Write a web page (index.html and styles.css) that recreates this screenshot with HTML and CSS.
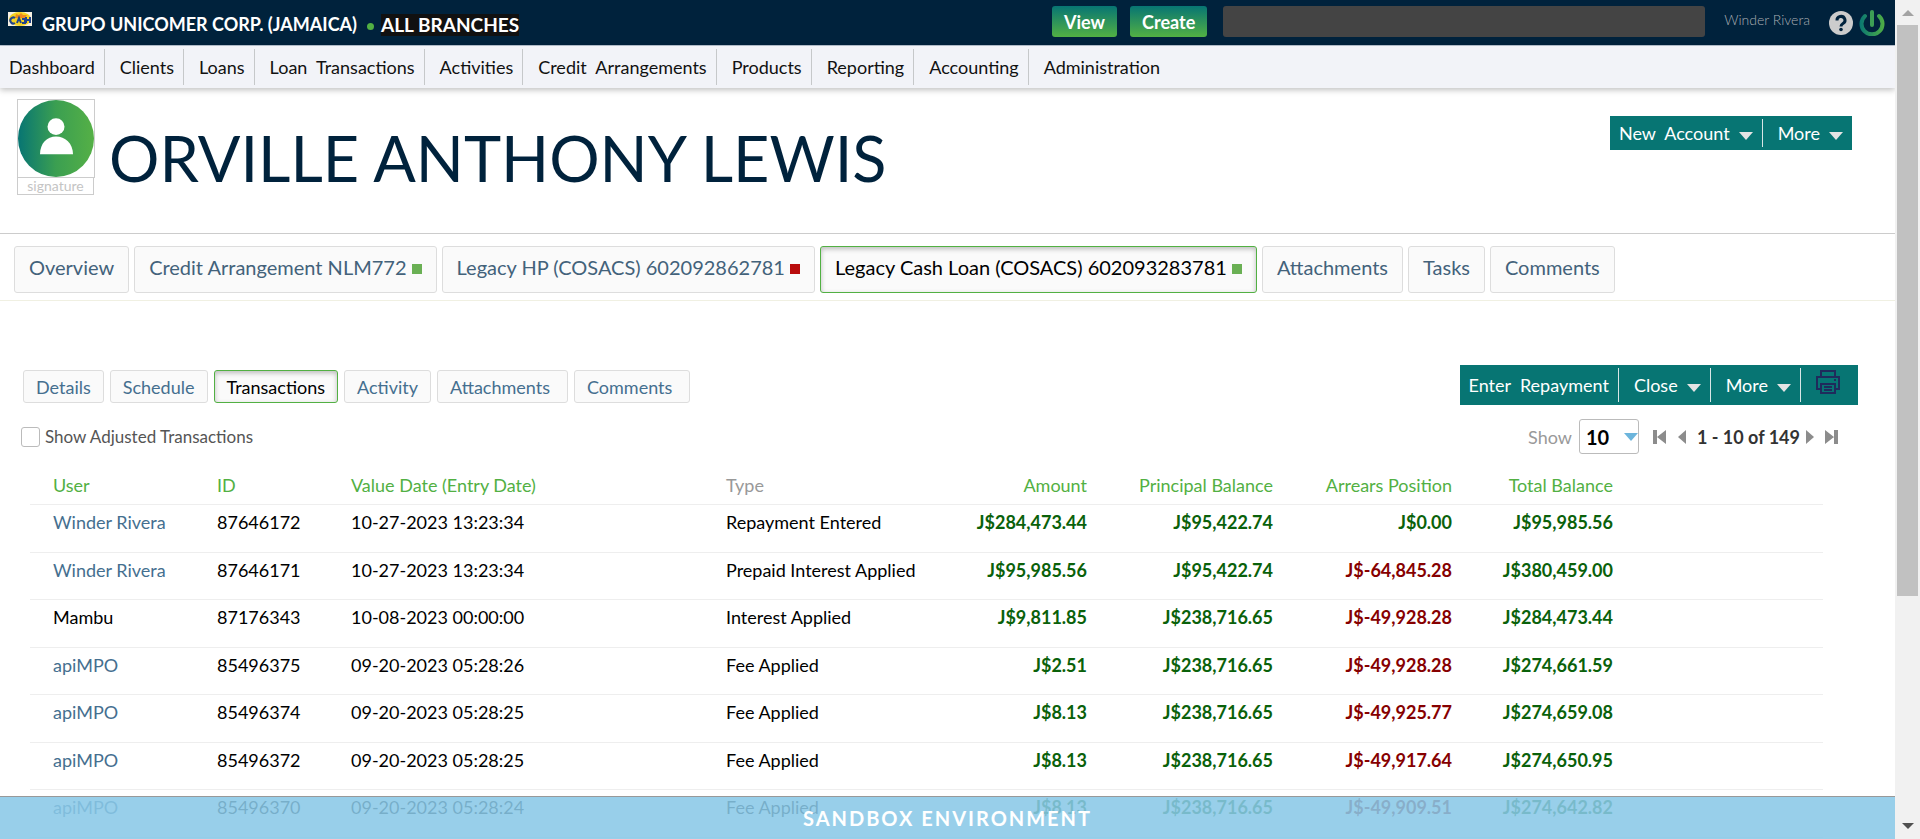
FILE: index.html
```html
<!DOCTYPE html>
<html lang="en">
<head>
<meta charset="utf-8">
<title>Orville Anthony Lewis</title>
<link rel="stylesheet" href="styles.css">
</head>
<body>
<div class="app">
<div class="page">
  <header class="topbar">
    <svg class="logo" viewBox="0 0 24 14" aria-hidden="true">
      <rect width="24" height="14" fill="#f6f1e4"/>
      <ellipse cx="12" cy="7" rx="11" ry="7" fill="#f5d321"/>
      <path d="M8 2l3 1 2-2 2 2 4 0-2 3H7z" fill="#ee8a1d"/>
      <path d="M7 6a3 3 0 1 0 0 5M9 11l2-5 2 5M18 5v6M22 5v6M18 8h4M14 7h3v4h-3" fill="none" stroke="#21448c" stroke-width="2"/>
    </svg>
    <span class="org">GRUPO UNICOMER CORP. (JAMAICA)</span>
    <span class="dot"></span>
    <span class="branch">ALL BRANCHES</span>
    <div class="top-actions">
      <button class="pill">View</button>
      <button class="pill">Create</button>
    </div>
    <input class="search" type="text" aria-label="Search">
    <a class="account" href="#">Winder Rivera</a>
    <button class="icon-btn" aria-label="Help">
      <svg width="24" height="24" viewBox="0 0 24 24"><circle cx="12" cy="12" r="12" fill="#ccc"/><path d="M8 9.500a4 3.800 0 1 1 6 3c-1.500.9-2 1.400-2 3" fill="none" stroke="#00223c" stroke-width="3"/><circle cx="12" cy="18.500" r="1.800" fill="#00223c"/></svg>
    </button>
    <button class="icon-btn" aria-label="Log out">
      <svg width="26" height="26" viewBox="0 0 26 26"><defs><linearGradient id="pw" gradientUnits="userSpaceOnUse" x1="0" y1="0" x2="26" y2="0"><stop offset="0" stop-color="#077573"/><stop offset="1" stop-color="#52b043"/></linearGradient></defs><path d="M6 6a10.500 10.500 0 1 0 14 0" fill="none" stroke="url(#pw)" stroke-width="4" stroke-linecap="round"/><path d="M13 2v13" fill="none" stroke="#3d9f55" stroke-width="4" stroke-linecap="round"/></svg>
    </button>
  </header>

  <nav class="mainnav">
    <a href="#">Dashboard</a><a href="#">Clients</a><a href="#">Loans</a><a href="#">Loan&nbsp; Transactions</a><a href="#">Activities</a><a href="#">Credit&nbsp; Arrangements</a><a href="#">Products</a><a href="#">Reporting</a><a href="#">Accounting</a><a href="#">Administration</a>
  </nav>

  <section class="client">
    <div class="portrait">
      <svg class="avatar" viewBox="0 0 76 78" preserveAspectRatio="none" aria-hidden="true"><defs><linearGradient id="av"><stop offset="0" stop-color="#077573"/><stop offset=".5" stop-color="#3b9f51"/><stop offset="1" stop-color="#55b046"/></linearGradient></defs><ellipse cx="38" cy="39" rx="38" ry="39" fill="url(#av)"/><circle cx="38" cy="27" r="8.500" fill="#fff"/><path d="M22 55c0-11 7-18 16-18s17 7 17 18z" fill="#fff"/></svg>
      <div class="signature">signature</div>
    </div>
    <h1>ORVILLE ANTHONY LEWIS</h1>
    <div class="toolbar client-tools">
      <button>New&nbsp; Account<i class="caret"></i></button>
      <button>More<i class="caret"></i></button>
    </div>
  </section>

  <nav class="tabs">
    <a href="#">Overview</a>
    <a href="#">Credit Arrangement NLM772<i class="state ok"></i></a>
    <a href="#">Legacy HP (COSACS) 602092862781<i class="state bad"></i></a>
    <a href="#" class="active">Legacy Cash Loan (COSACS) 602093283781<i class="state ok"></i></a>
    <a href="#">Attachments</a>
    <a href="#">Tasks</a>
    <a href="#">Comments</a>
  </nav>

  <div class="loanbar">
    <nav class="subtabs">
      <a href="#">Details</a>
      <a href="#">Schedule</a>
      <a href="#" class="active">Transactions</a>
      <a href="#">Activity</a>
      <a href="#" class="wide">Attachments</a>
      <a href="#" class="wide">Comments</a>
    </nav>
    <div class="toolbar loan-tools">
      <button>Enter&nbsp; Repayment</button>
      <button>Close<i class="caret"></i></button>
      <button>More<i class="caret"></i></button>
      <button class="print" aria-label="Print"><svg width="24" height="24" viewBox="0 0 24 24" fill="none" stroke="#1f2b5c" stroke-width="2"><path d="M5 7V1h14v6M5 19H1V7h22v12h-4M5 14h14v9H5zM8 17h8M8 20h8M18 10h2"/></svg></button>
    </div>
  </div>

  <div class="filters">
    <label class="check"><input type="checkbox">Show Adjusted Transactions</label>
    <div class="pager">
      <label for="size">Show</label>
      <span class="select"><select id="size"><option>10</option></select></span>
      <button class="first" aria-label="First page"><svg width="13" height="14" viewBox="0 0 13 14"><path d="M0 0h4v14H0zM13 0v14L4 7z"/></svg></button>
      <button class="prev" aria-label="Previous page"><svg width="8" height="14" viewBox="0 0 8 14"><path d="M8 0v14L0 7z"/></svg></button>
      <strong>1 - 10 of 149</strong>
      <button class="next" aria-label="Next page"><svg width="8" height="14" viewBox="0 0 8 14"><path d="M0 0v14l8-7z"/></svg></button>
      <button class="last" aria-label="Last page"><svg width="13" height="14" viewBox="0 0 13 14"><path d="M9 0h4v14H9zM0 0v14l9-7z"/></svg></button>
    </div>
  </div>

  <table class="tx">
    <colgroup><col class="c-user"><col class="c-id"><col class="c-date"><col class="c-type"><col class="c-amt"><col class="c-prin"><col class="c-arr"><col class="c-tot"><col></colgroup>
    <thead>
      <tr><th>User</th><th>ID</th><th>Value Date (Entry Date)</th><th class="plain">Type</th><th class="num">Amount</th><th class="num">Principal Balance</th><th class="num">Arrears Position</th><th class="num">Total Balance</th><th></th></tr>
    </thead>
    <tbody>
      <tr><td><a href="#">Winder Rivera</a></td><td>87646172</td><td>10-27-2023 13:23:34</td><td>Repayment Entered</td><td class="num">J$284,473.44</td><td class="num">J$95,422.74</td><td class="num">J$0.00</td><td class="num">J$95,985.56</td><td></td></tr>
      <tr><td><a href="#">Winder Rivera</a></td><td>87646171</td><td>10-27-2023 13:23:34</td><td>Prepaid Interest Applied</td><td class="num">J$95,985.56</td><td class="num">J$95,422.74</td><td class="num neg">J$-64,845.28</td><td class="num">J$380,459.00</td><td></td></tr>
      <tr><td>Mambu</td><td>87176343</td><td>10-08-2023 00:00:00</td><td>Interest Applied</td><td class="num">J$9,811.85</td><td class="num">J$238,716.65</td><td class="num neg">J$-49,928.28</td><td class="num">J$284,473.44</td><td></td></tr>
      <tr><td><a href="#">apiMPO</a></td><td>85496375</td><td>09-20-2023 05:28:26</td><td>Fee Applied</td><td class="num">J$2.51</td><td class="num">J$238,716.65</td><td class="num neg">J$-49,928.28</td><td class="num">J$274,661.59</td><td></td></tr>
      <tr><td><a href="#">apiMPO</a></td><td>85496374</td><td>09-20-2023 05:28:25</td><td>Fee Applied</td><td class="num">J$8.13</td><td class="num">J$238,716.65</td><td class="num neg">J$-49,925.77</td><td class="num">J$274,659.08</td><td></td></tr>
      <tr><td><a href="#">apiMPO</a></td><td>85496372</td><td>09-20-2023 05:28:25</td><td>Fee Applied</td><td class="num">J$8.13</td><td class="num">J$238,716.65</td><td class="num neg">J$-49,917.64</td><td class="num">J$274,650.95</td><td></td></tr>
      <tr><td><a href="#">apiMPO</a></td><td>85496370</td><td>09-20-2023 05:28:24</td><td>Fee Applied</td><td class="num">J$8.13</td><td class="num">J$238,716.65</td><td class="num neg">J$-49,909.51</td><td class="num">J$274,642.82</td><td></td></tr>
    </tbody>
  </table>

  <div class="banner">SANDBOX ENVIRONMENT</div>
</div>
<div class="scrollbar" aria-hidden="true">
  <span class="arrow up"></span>
  <span class="thumb"></span>
  <span class="arrow down"></span>
</div>
</div>
</body>
</html>
```

FILE: styles.css
```css
* { box-sizing: border-box; }
body { margin: 0; font: 18px/22px Lato, "Open Sans", sans-serif; color: #111; background: #fff; }
a { color: #456f8f; text-decoration: none; }
button { font: inherit; border: 0; padding: 0; background: none; cursor: pointer; }
svg { display: block; }

.app { display: flex; height: 100vh; overflow: hidden; }
.page { position: relative; flex: 1; min-width: 0; overflow: hidden; }

/* top bar */
.topbar { display: flex; align-items: center; height: 46px; padding: 0 10px 2px 8px; background: #00223c; border-bottom: 1px solid #b9c4d2; color: #fff; }
.logo { width: 24px; height: 14px; margin: 0 10px 6px 0; }
.org { font-weight: 700; line-height: 24px; margin-top: 4px; }
.dot { width: 7px; height: 7px; margin: 10px 7px 0 10px; border-radius: 50%; background: #52b043; }
.branch { font-weight: 700; font-size: 19px; line-height: 22px; margin-top: 6px; background: #111; }
.top-actions { display: flex; gap: 13px; margin-left: auto; }
.pill { height: 31px; padding: 0 12px; border-radius: 3px; color: #fff; font-weight: 700; background: linear-gradient(#077573, #52b043); }
.search { width: 482px; height: 31px; margin: 0 19px 0 16px; border: 0; border-radius: 3px; background: #444; }
.account { margin: 0 19px 4px 0; color: #a9adb2; font-size: 14px; font-weight: 300; line-height: 20px; }
.icon-btn { margin: 2px 0 0 0; }
.icon-btn + .icon-btn { margin-left: 6px; }

/* main navigation */
.mainnav { display: flex; align-items: flex-start; height: 42px; padding-top: 3px; background: #f2f3f8; box-shadow: 0 2px 6px rgba(0, 0, 0, .25); }
.mainnav a { height: 36px; padding: 0 9px 0 15px; line-height: 37px; color: #111; border-right: 1px solid #c6c8ca; }
.mainnav a:first-child { padding-left: 9px; }
.mainnav a:last-child { border: 0; }

/* client header */
.client { display: flex; align-items: flex-start; height: 146px; padding: 11px 43px 0 17px; border-bottom: 1px solid #ccc; }
.portrait { width: 78px; }
.avatar { width: 78px; height: 79px; border: 1px solid #ccc; }
.signature { width: 77px; height: 17px; border: 1px solid #ccc; border-top: 0; color: #c4c4c4; font-size: 14px; line-height: 16px; text-align: center; }
h1 { margin: 21px 0 0 14px; font-size: 63px; line-height: 76px; font-weight: 400; color: #00223c; }

.toolbar { display: flex; margin-left: auto; background: #077573; }
.toolbar button { display: flex; align-items: center; padding: 0 9px 0 15px; color: #fff; border-right: 1px solid #d8e6e6; }
.toolbar button:first-child { padding-left: 9px; }
.toolbar button:last-child { border: 0; }
.caret { width: 0; height: 0; margin: 6px 0 0 9px; border: 7px solid transparent; border-top: 8px solid #e4e4e4; border-bottom: 0; }
.client-tools { margin-top: 17px; height: 34px; padding: 3px 0; }
.loan-tools { height: 40px; padding: 3px 0; }
.loan-tools .print { padding: 0 18px 6px 15px; }

/* account tabs */
.tabs { display: flex; gap: 5px; padding: 12px 14px 7px; border-bottom: 1px solid #f0f0e2; }
.tabs a, .subtabs a { display: flex; align-items: center; border: 1px solid #ddd; border-radius: 3px; background: #fafafa; }
.tabs a { height: 47px; padding: 0 14px 6px; font-size: 20px; color: #43627a; }
.tabs .active, .subtabs .active { border-color: #52b043; color: #000; box-shadow: inset 0 2px 5px rgba(0, 0, 0, .25); }
.state { width: 10px; height: 10px; margin: 5px 0 0 5px; }
.ok { background: #6ab054; }
.bad { background: #b90c0c; }

.loanbar { display: flex; align-items: center; padding: 64px 37px 0 23px; }
.subtabs { display: flex; gap: 6px; margin-top: 3px; }
.subtabs a { height: 33px; padding: 0 12px; }
.subtabs .wide { padding-right: 17px; }

.filters { display: flex; align-items: center; justify-content: space-between; height: 35px; margin: 14px 57px 0 21px; }
.check { display: flex; align-items: center; gap: 5px; font-size: 17px; color: #555; }
.check input { appearance: none; width: 19px; height: 20px; margin: 0; border: 1px solid #bbb; border-radius: 3px; background: #fff; }
.pager { display: flex; align-items: center; }
.pager label { margin-right: 7px; color: #999; }
.pager strong { margin: 0 6px 0 11px; color: #333; }
.pager svg { fill: #8c8c8c; }
.first { margin: 0 12px 0 14px; }
.last { margin-left: 11px; }
.select { position: relative; }
.select::after { content: ""; position: absolute; right: 1px; top: 14px; border: 7px solid transparent; border-top: 8px solid #6cb5dc; border-bottom: 0; pointer-events: none; }
.select select { appearance: none; display: block; width: 60px; height: 35px; padding: 0 0 0 6px; border: 1px solid #bbb; border-radius: 3px; background: #fff; color: #000; font: 700 20px/24px Lato, sans-serif; }

/* transactions */
.tx { width: calc(100% - 102px); margin: 17px 72px 0 30px; border-collapse: collapse; table-layout: fixed; }
.c-user { width: 164px; }
.c-id { width: 134px; }
.c-date { width: 375px; }
.c-type { width: 211px; }
.c-amt { width: 173px; }
.c-prin { width: 186px; }
.c-arr { width: 179px; }
.c-tot { width: 161px; }
.tx th, .tx td { padding: 0 0 0 23px; text-align: left; vertical-align: top; white-space: nowrap; border-bottom: 1px solid #eee; }
.tx th { height: 33px; padding-top: 3px; font-weight: 400; color: #52b043; }
.tx th.plain { color: #999; }
.tx td { height: 48px; padding-top: 6px; color: #000; }
.tx tbody tr:nth-child(even) td { height: 47px; }
.tx .num { padding-left: 0; text-align: right; }
.tx td.num { font-weight: 700; color: #0a610a; }
.tx td.neg { color: #860000; }

.banner { position: absolute; left: 0; right: 0; bottom: 0; height: 43px; border-top: 1px solid #999; background: rgba(137, 200, 231, .87); color: #fff; font-size: 20px; font-weight: 700; line-height: 42px; text-align: center; letter-spacing: 2px; }

/* scrollbar */
.scrollbar { display: flex; flex-direction: column; align-items: center; width: 25px; background: #f1f1f1; }
.thumb { width: 21px; height: 68vh; margin-top: 9px; background: #c1c1c1; }
.arrow { border: 6px solid transparent; }
.up { margin-top: 10px; border-top: 0; border-bottom-color: #a3a3a3; }
.down { margin: auto 0 10px; border-bottom: 0; border-top-color: #505050; }
```
